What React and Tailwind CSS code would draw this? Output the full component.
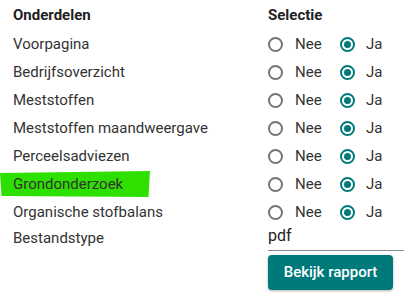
const onderdelen = [
  "Voorpagina",
  "Bedrijfsoverzicht",
  "Meststoffen",
  "Meststoffen maandweergave",
  "Perceelsadviezen",
  "Grondonderzoek",
  "Organische stofbalans",
];

function Radio({ checked }) {
  return checked ? (
    <span className="flex h-[15px] w-[15px] items-center justify-center rounded-full border-2 border-[#00797a]">
      <span className="h-[7px] w-[7px] rounded-full bg-[#00797a]" />
    </span>
  ) : (
    <span className="h-[15px] w-[15px] rounded-full border-2 border-[#757575]" />
  );
}

export default function App() {
  return (
    <div className="h-[297px] w-[404px] overflow-hidden bg-white pl-[13px] pt-[1px] font-['Roboto',sans-serif] text-[15px] text-[#333]">
      <div className="grid grid-cols-[255px_1fr]">
        <div className="flex h-[29px] items-center font-bold text-[#222]">Onderdelen</div>
        <div className="flex h-[29px] items-center font-bold text-[#222]">Selectie</div>

        {onderdelen.map((label) => (
          <div key={label} className="contents">
            <div className="flex h-[28px] items-center">
              {label === "Grondonderzoek" ? (
                <span className="-ml-[13px] flex h-[26px] w-[150px] items-center bg-[#2ee000] pl-[13px] [clip-path:polygon(0_2px,100%_0,99%_100%,1%_96%)]">
                  {label}
                </span>
              ) : (
                label
              )}
            </div>
            <div className="flex h-[28px] items-center">
              <Radio />
              <span className="ml-[12px] w-[45px]">Nee</span>
              <Radio checked />
              <span className="ml-[11px]">Ja</span>
            </div>
          </div>
        ))}

        <div className="flex h-[25px] items-center">Bestandstype</div>
        <div className="flex h-[25px] items-end border-b border-[#8a8a8a] pb-[2px] text-[16px] text-[#222]">pdf</div>

        <div />
        <div className="pt-[4px]">
          <button className="h-[35px] w-[125px] rounded-[4px] bg-[#00797a] text-[15px] font-medium text-white shadow-[0_1px_3px_rgba(0,0,0,0.3)]">
            Bekijk rapport
          </button>
        </div>
      </div>
    </div>
  );
}
